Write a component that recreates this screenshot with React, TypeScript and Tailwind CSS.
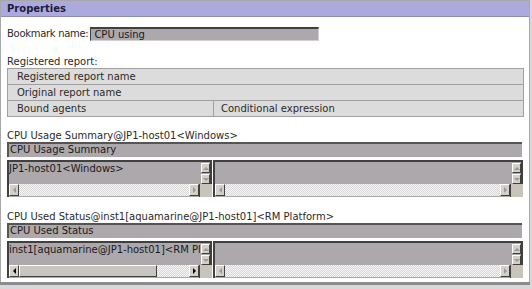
import React from "react"

const ArrowUp = ({ on }: { on?: boolean }) => (
    <span className={on ? "border-x-[3px] border-b-[3px] border-x-transparent border-b-black" : "border-x-[3px] border-b-[3px] border-x-transparent border-b-[#9a9a9a]"} />
)
const ArrowDown = ({ on }: { on?: boolean }) => (
    <span className={on ? "border-x-[3px] border-t-[3px] border-x-transparent border-t-black" : "border-x-[3px] border-t-[3px] border-x-transparent border-t-[#9a9a9a]"} />
)
const ArrowLeft = ({ on }: { on?: boolean }) => (
    <span className={on ? "border-y-[3px] border-r-[3px] border-y-transparent border-r-black" : "border-y-[3px] border-r-[3px] border-y-transparent border-r-[#9a9a9a]"} />
)
const ArrowRight = ({ on }: { on?: boolean }) => (
    <span className={on ? "border-y-[3px] border-l-[3px] border-y-transparent border-l-black" : "border-y-[3px] border-l-[3px] border-y-transparent border-l-[#9a9a9a]"} />
)

const btn =
    "flex items-center justify-center border border-t-white border-l-white border-b-[#404040] border-r-[#404040] bg-[#d4d0c8]"

const HScroll = ({ thumb, on }: { thumb?: number; on?: boolean }) => (
    <div className="flex h-[13px] border-r border-[#404040] pb-px">
        <div className={btn + " w-[10px]"}>
            <ArrowLeft on={on} />
        </div>
        <div className="flex flex-1 bg-[image:repeating-conic-gradient(#d6d6d6_0%_25%,#f6f6f6_0%_50%)] bg-[length:2px_2px]">
            {thumb ? (
                <div
                    className="border border-t-white border-l-white border-b-[#404040] border-r-[#404040] bg-[#c8c4c0]"
                    style={{ width: thumb }}
                />
            ) : null}
        </div>
        <div className={btn + " w-[10px]"}>
            <ArrowRight on={on} />
        </div>
    </div>
)

const ListBox = ({ text, thumb, on }: { text?: string; thumb?: number; on?: boolean }) => (
    <div className="flex h-[37px] border-t-2 border-l-2 border-[#404040] bg-[#aca8ac]">
        <div className="flex min-w-0 flex-1 flex-col">
            <div className="flex-1 overflow-hidden whitespace-nowrap leading-[13px] text-[#1a1a1a]">
                {text}
            </div>
            <HScroll thumb={thumb} on={on} />
        </div>
        <div className="flex w-[12px] flex-col">
            <div className="flex flex-col gap-px border-r-2 border-[#404040] pl-px pt-px">
                <div className={btn + " h-[10px] w-[9px]"}>
                    <ArrowUp />
                </div>
                <div className={btn + " h-[10px] w-[9px]"}>
                    <ArrowDown />
                </div>
            </div>
            <div className="flex-1 bg-[#c8c4bc]" />
        </div>
    </div>
)

const Section = ({
    label,
    title,
    left,
    thumb,
}: {
    label: string
    title: string
    left: string
    thumb?: number
}) => (
    <div>
        <div className="whitespace-nowrap leading-[12px]">{label}</div>
        <div className="mr-px h-[15px] border-t-2 border-l-2 border-[#555] bg-[#aca8ac] pl-[1px] leading-[12px] text-[#1a1a1a]">
            {title}
        </div>
        <div className="mt-[3px] grid grid-cols-[205px_310px] gap-px">
            <ListBox text={left} thumb={thumb} on={!!thumb} />
            <ListBox />
        </div>
    </div>
)

export default function App() {
    return (
        <div className="h-[289px] w-[532px] bg-[#d8d8d8] font-['DejaVu_Sans',sans-serif] text-[10px] text-[#2a2a2a]">
            <div className="h-[282px] w-[530px] border-x border-t border-[#a8a8a8] bg-white">
                <div className="h-[16px] border-b border-[#8c8cc0] bg-[#acaadc] pl-[6px] font-bold leading-[16px] text-[#1c1c3c]">
                    Properties
                </div>

                <div className="px-[6px]">
                    <div className="mt-[9px] flex items-center">
                        <span className="mr-[2px] shrink-0 whitespace-nowrap tracking-[-0.3px]">Bookmark name:</span>
                        <div className="h-[14px] w-[229px] border-t-2 border-l border-[#404040] border-r border-b border-r-[#d0d0d0] border-b-[#d0d0d0] bg-[#aca8ac] pl-[3px] leading-[11px] text-[#1a1a1a]">
                            CPU using
                        </div>
                    </div>

                    <div className="mt-[15px] leading-[12px]">Registered report:</div>
                    <div className="w-[517px] border border-[#a0a0a0] bg-[#dcdcdc] leading-[15px]">
                        <div className="border-b border-[#a0a0a0] pl-[9px]">Registered report name</div>
                        <div className="border-b border-[#a0a0a0] pl-[9px]">Original report name</div>
                        <div className="flex">
                            <div className="w-[206px] border-r border-[#a0a0a0] pl-[9px]">Bound agents</div>
                            <div className="pl-[7px]">Conditional expression</div>
                        </div>
                    </div>

                    <div className="mt-[13px]">
                        <Section
                            label="CPU Usage Summary@JP1-host01<Windows>"
                            title="CPU Usage Summary"
                            left="JP1-host01<Windows>"
                        />
                    </div>
                    <div className="mt-[14px]">
                        <Section
                            label="CPU Used Status@inst1[aquamarine@JP1-host01]<RM Platform>"
                            title="CPU Used Status"
                            left="inst1[aquamarine@JP1-host01]<RM Platform>"
                            thumb={138}
                        />
                    </div>
                </div>
            </div>
            <div className="h-[3px] w-[530px] bg-[#8c8c8c]" />
        </div>
    )
}
